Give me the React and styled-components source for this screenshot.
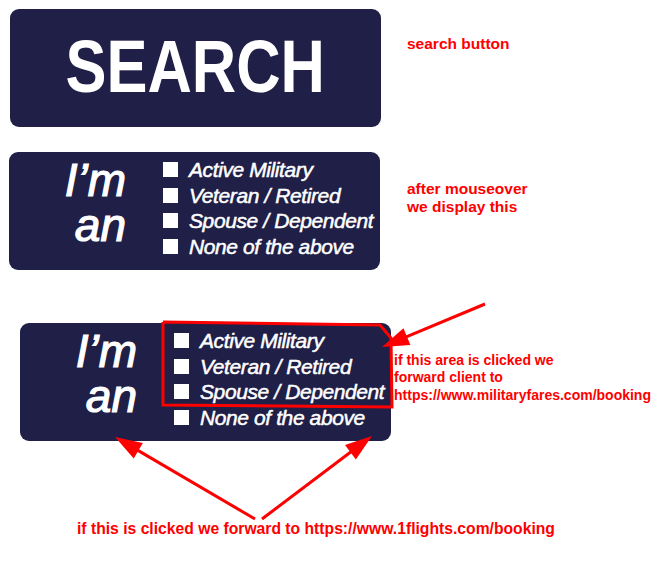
import styled, { createGlobalStyle } from "styled-components";

const GlobalStyle = createGlobalStyle`
  html, body {
    margin: 0;
    padding: 0;
    background: #ffffff;
  }
  body {
    font-family: "Liberation Sans", Arial, sans-serif;
  }
`;

const Page = styled.div`
  position: relative;
  width: 672px;
  height: 586px;
  display: flex;
  flex-direction: column;
  overflow: hidden;
`;

const Row = styled.div`
  display: flex;
  align-items: flex-start;
  margin-top: ${(p) => p.$top}px;
`;

const Panel = styled.div`
  width: 371px;
  height: 118px;
  margin-left: ${(p) => p.$left}px;
  background: #1f1f47;
  border-radius: 9px;
  color: #ffffff;
  flex-shrink: 0;
`;

const SearchButton = styled(Panel).attrs({ as: "button" })`
  border: none;
  padding: 0;
  display: flex;
  align-items: center;
  justify-content: center;
  cursor: pointer;
  font-family: "Liberation Sans", Arial, sans-serif;
`;

const SearchLabel = styled.span`
  display: inline-block;
  font-size: 74px;
  font-weight: bold;
  line-height: 1;
  transform: scaleX(0.83);
  margin-top: -3px;
`;

const ChooserPanel = styled(Panel)`
  display: grid;
  grid-template-columns: 117px auto;
  column-gap: 37px;
`;

const Lead = styled.div`
  padding-top: 5.5px;
  text-align: right;
  font-size: 46px;
  font-style: italic;
  line-height: 45px;
  -webkit-text-stroke: 1.2px #ffffff;
`;

const Options = styled.ul`
  list-style: none;
  margin: 0;
  padding: 5px 0 0;
`;

const Option = styled.li`
  display: flex;
  align-items: center;
  gap: 11px;
  height: 25.5px;
  font-size: 21px;
  font-style: italic;
  letter-spacing: -0.4px;
  line-height: 25.5px;
  white-space: nowrap;
  -webkit-text-stroke: 0.5px #ffffff;
  cursor: pointer;
`;

const Box = styled.span`
  width: 15px;
  height: 15px;
  background: #ffffff;
  flex-shrink: 0;
`;

const Note = styled.p`
  margin: 0;
  margin-left: ${(p) => p.$left}px;
  padding-top: ${(p) => p.$top || 0}px;
  color: #ff0000;
  font-weight: bold;
  font-size: ${(p) => p.$size}px;
  line-height: 17.5px;
  white-space: nowrap;
`;

const Overlay = styled.svg`
  position: absolute;
  left: 0;
  top: 0;
  pointer-events: none;
`;

const OPTIONS = [
  "Active Military",
  "Veteran / Retired",
  "Spouse / Dependent",
  "None of the above",
];

const Chooser = ({ left }) => (
  <ChooserPanel $left={left}>
    <Lead>
      I’m
      <br />
      an
    </Lead>
    <Options>
      {OPTIONS.map((o) => (
        <Option key={o}>
          <Box />
          {o}
        </Option>
      ))}
    </Options>
  </ChooserPanel>
);

// line + filled head, head tip at (x2, y2)
const Arrow = ({ x1, y1, x2, y2, len = 27, half = 9 }) => {
  const dx = x2 - x1;
  const dy = y2 - y1;
  const d = Math.hypot(dx, dy);
  const ux = dx / d;
  const uy = dy / d;
  const bx = x2 - ux * len;
  const by = y2 - uy * len;
  const px = -uy * half;
  const py = ux * half;
  return (
    <g>
      <line x1={x1} y1={y1} x2={bx + ux * 2} y2={by + uy * 2} stroke="#ff0000" strokeWidth="3" />
      <polygon
        points={`${x2},${y2} ${bx + px},${by + py} ${bx - px},${by - py}`}
        fill="#ff0000"
      />
    </g>
  );
};

export default function App() {
  return (
    <>
      <GlobalStyle />
      <Page>
        <Row $top={9}>
          <SearchButton $left={10}>
            <SearchLabel>SEARCH</SearchLabel>
          </SearchButton>
          <Note $left={26} $top={26} $size={15.5}>
            search button
          </Note>
        </Row>

        <Row $top={25}>
          <Chooser left={9} />
          <Note $left={27} $top={28} $size={15.5}>
            after mouseover
            <br />
            we display this
          </Note>
        </Row>

        <Row $top={53}>
          <Chooser left={20} />
          <Note $left={3} $top={28.5} $size={14}>
            if this area is clicked we
            <br />
            forward client to
            <br />
            https://www.militaryfares.com/booking
          </Note>
        </Row>

        <Row $top={79}>
          <Note $left={77} $size={15.7}>
            if this is clicked we forward to https://www.1flights.com/booking
          </Note>
        </Row>

        <Overlay width="672" height="586" viewBox="0 0 672 586">
          <polyline
            points="163,322 380,325 391,338 392,407 163,405 163,322"
            fill="none"
            stroke="#ff0000"
            strokeWidth="3"
          />
          <Arrow x1={485} y1={304} x2={382} y2={347} />
          <Arrow x1={255} y1={519} x2={115} y2={437} />
          <Arrow x1={262} y1={519} x2={372} y2={436} />
        </Overlay>
      </Page>
    </>
  );
}
